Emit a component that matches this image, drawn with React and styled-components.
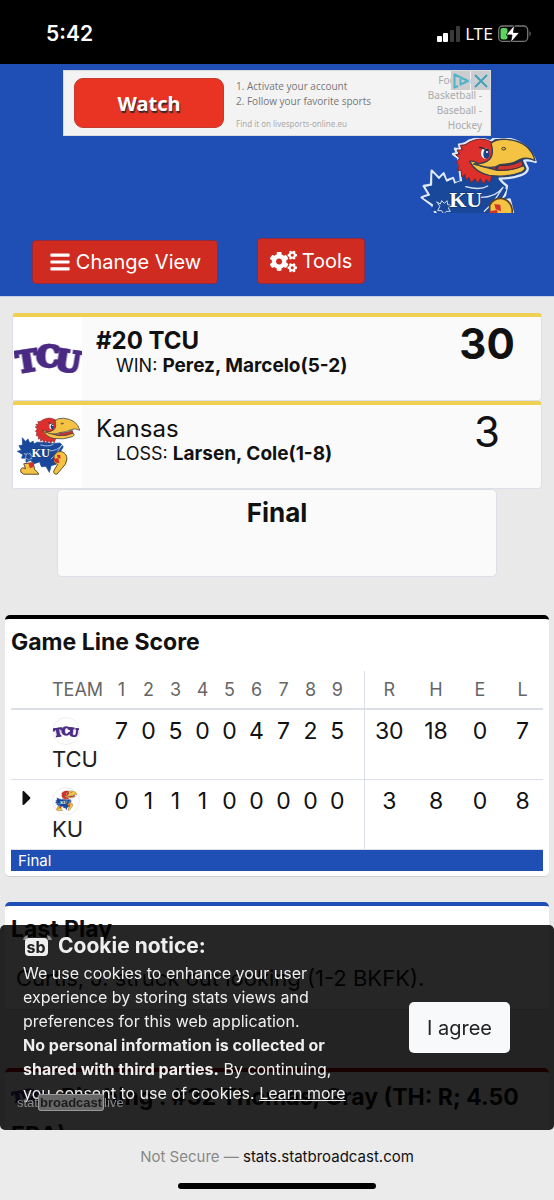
import React from 'react';
import styled, { createGlobalStyle } from 'styled-components';
import { FaBars, FaCaretRight, FaCogs } from 'react-icons/fa';

const innings = [1, 2, 3, 4, 5, 6, 7, 8, 9];
const totals = ['R', 'H', 'E', 'L'];

const lineScore = [
  {
    team: 'TCU',
    batting: false,
    runs: [7, 0, 5, 0, 0, 4, 7, 2, 5],
    totals: [30, 18, 0, 7],
  },
  {
    team: 'KU',
    batting: true,
    runs: [0, 1, 1, 1, 0, 0, 0, 0, 0],
    totals: [3, 8, 0, 8],
  },
];

const TcuLogo = ({ width }) => (
  <svg width={width} viewBox='0 0 210 120' role='img' aria-label='TCU'>
    <TcuLetters>
      <text x='40' y='100' transform='rotate(-9 40 64)'>
        T
      </text>
      <text x='105' y='86'>
        C
      </text>
      <text x='168' y='100' transform='rotate(9 168 64)'>
        U
      </text>
    </TcuLetters>
  </svg>
);

const Jayhawk = ({ width, viewBox, outline, backing }) => (
  <svg width={width} viewBox={viewBox} role='img' aria-label='Kansas Jayhawk'>
    <g strokeLinejoin='round' strokeLinecap='round'>
      {/* light edge behind the whole bird */}
      <path
        d='M128 72 L112 60 L124 58 L118 44 L134 46 L130 32 Q150 30 160 20 Q190 8 224 22 L236 12 Q300 8 334 42 Q352 60 360 84 Q342 76 326 80 L336 102 Q338 116 314 124 Q286 134 252 134 L262 146 L274 156 L268 184 L246 204 L282 196 L292 236 L200 262 L80 250 L60 238 L50 214 L18 190 L40 182 L24 156 L46 152 L48 110 L70 132 L84 118 L92 140 L112 132 L118 148 L136 142 Z'
        fill={backing}
        stroke={outline}
        strokeWidth='7'
      />
      {/* tail and body */}
      <path
        d='M132 144 L114 152 L110 138 L92 148 L82 126 L70 140 L52 120 L54 158 L34 162 L48 186 L26 192 L56 210 L48 228 L72 230 L72 250 L96 240 L116 258 L144 248 L154 274 L178 272 L196 304 L206 268 L230 262 L244 214 L270 168 L254 148 L212 150 L180 146 Z'
        fill='#19489a'
        stroke='#19489a'
        strokeWidth='4'
      />
      <path
        d='M64 204 L74 210 L78 200 L86 208 L94 200 L96 212 L106 214 L98 222 L104 232 L92 232 L84 240 L78 230 L66 230 L72 218 Z'
        fill='none'
        stroke='#d3e0f1'
        strokeWidth='3'
      />
      <path
        d='M150 158 Q194 170 216 156 M196 190 Q240 190 262 160 M262 160 L232 206 L206 232'
        fill='none'
        stroke='#d3e0f1'
        strokeWidth='4'
      />
      {/* shoes */}
      <path
        d='M222 214 Q236 188 262 194 Q288 202 290 232 Q288 262 262 284 L236 314 Q216 314 220 296 L240 262 L222 252 Z'
        fill='#f5c344'
        stroke='#5b4321'
        strokeWidth='5'
      />
      <path
        d='M220 232 L244 228 L250 256 L228 252 Z M236 210 L254 212 L256 232 L240 226 Z'
        fill='#d7312c'
      />
      <path
        d='M62 258 L110 252 L118 290 Q134 300 140 314 L60 314 Q38 306 44 288 Q50 274 68 284 Z'
        fill='#f5c344'
        stroke='#5b4321'
        strokeWidth='5'
      />
      <path d='M84 254 L112 252 L112 276 L92 282 Z' fill='#d7312c' />
      {/* head */}
      <path
        d='M228 24 Q196 6 162 24 Q148 36 134 34 L140 48 L124 48 L132 60 L120 62 L132 72 L122 86 L130 92 L126 110 L136 108 L138 128 L148 122 L150 138 L160 130 L166 146 L178 134 L186 148 L194 134 L204 150 L212 136 L222 146 L230 124 L244 92 L240 50 Z'
        fill='#dd2f2b'
        stroke='#7c2430'
        strokeWidth='3'
      />
      <path
        d='M162 82 Q176 78 196 96 L242 108 Q286 112 322 94 Q336 106 318 114 Q272 132 220 124 Q178 114 162 82 Z'
        fill='#f5c344'
        stroke='#38404e'
        strokeWidth='4'
      />
      <path
        d='M250 94 Q288 98 318 80 L322 96 Q286 112 244 108 Z'
        fill='#cf3530'
        stroke='#3b2f38'
        strokeWidth='3'
      />
      <path
        d='M226 28 Q240 14 272 16 Q344 22 358 80 Q334 68 314 76 Q288 92 252 92 Q236 104 204 98 L174 90 Q208 90 222 76 Q236 60 226 28 Z'
        fill='#f5c344'
        stroke='#38404e'
        strokeWidth='4'
      />
      <ellipse cx='208' cy='58' rx='12' ry='16' fill='#fff' />
      <ellipse cx='212' cy='60' rx='9' ry='14' fill='#1b4186' />
      <circle cx='214' cy='54' r='3' fill='#fff' />
      <path d='M192 40 L218 48' stroke='#23293a' strokeWidth='4' />
      <ellipse
        cx='264'
        cy='44'
        rx='6'
        ry='4'
        fill='#e5ad35'
        stroke='#4f4730'
        strokeWidth='3'
      />
      <Monogram x='150' y='220'>
        KU
      </Monogram>
    </g>
  </svg>
);

const SmallJayhawk = ({ width }) => (
  <Jayhawk
    width={width}
    viewBox='8 4 362 320'
    outline='#fff'
    backing='#fff'
  />
);

const StatusBar = () => (
  <StatusRow>
    <Clock>5:42</Clock>
    <StatusIcons>
      <svg width='24' height='18' viewBox='0 0 24 18' aria-hidden='true'>
        <rect x='0' y='11' width='5' height='6' rx='1' fill='#fff' />
        <rect x='6' y='8' width='5' height='9' rx='1' fill='#fff' />
        <rect x='13' y='5' width='4' height='12' rx='1' fill='#3a3a3a' />
        <rect x='19' y='1' width='4' height='16' rx='1' fill='#3a3a3a' />
      </svg>
      <span>LTE</span>
      <svg width='34' height='20' viewBox='0 0 34 20' aria-hidden='true'>
        <rect
          x='0.7'
          y='2'
          width='29'
          height='15.4'
          rx='4'
          fill='none'
          stroke='#777'
          strokeWidth='1.3'
        />
        <rect x='2.5' y='4' width='7' height='11.5' rx='2' fill='#5fd35f' />
        <path d='M31.5 7 Q34 9.7 31.5 12.5 Z' fill='#777' />
        <path
          d='M16.5 1 L8 11 L14 11 L12.5 19 L21.5 8.5 L15.5 8.5 Z'
          fill='#fff'
          stroke='#000'
          strokeWidth='0.8'
        />
      </svg>
    </StatusIcons>
  </StatusRow>
);

const AdBanner = () => (
  <Ad>
    <WatchButton type='button'>Watch</WatchButton>
    <AdCopy>
      <AdSteps>
        <li>Activate your account</li>
        <li>Follow your favorite sports</li>
      </AdSteps>
      <AdSource>Find it on livesports-online.eu</AdSource>
    </AdCopy>
    <AdSports>
      <span>Football -</span>
      <span>Basketball -</span>
      <span>Baseball -</span>
      <span>Hockey</span>
    </AdSports>
    <AdControls>
      <AdControl type='button' aria-label='Ad choices'>
        <svg width='18' height='16' viewBox='0 0 18 16'>
          <path
            d='M6 13 L2.5 14.5 L2.5 1.5 L16 8 L8.5 11.5 L8.5 6'
            fill='none'
            stroke='#52b3c6'
            strokeWidth='2'
            strokeLinejoin='round'
          />
        </svg>
      </AdControl>
      <AdControl type='button' aria-label='Close ad'>
        <svg width='16' height='16' viewBox='0 0 16 16'>
          <path
            d='M2 2 L14 14 M14 2 L2 14'
            stroke='#3f9fb8'
            strokeWidth='1.8'
          />
        </svg>
      </AdControl>
    </AdControls>
  </Ad>
);

const LineScoreTable = () => (
  <ScoreTable>
    <colgroup>
      <Col $width={30} />
      <Col $width={67} />
      {innings.map((n) => (
        <Col key={n} $width={n === 9 ? 40 : 27} />
      ))}
      <Col $width={50} />
      <Col $width={44} />
      <Col $width={44} />
      <Col $width={41} />
    </colgroup>
    <thead>
      <tr>
        <HeadCell aria-label='Batting' />
        <HeadCell $team scope='col'>
          TEAM
        </HeadCell>
        {innings.map((n) => (
          <HeadCell key={n} $last={n === 9} scope='col'>
            {n}
          </HeadCell>
        ))}
        {totals.map((label) => (
          <HeadCell key={label} scope='col'>
            {label}
          </HeadCell>
        ))}
      </tr>
    </thead>
    <tbody>
      {lineScore.map((row) => (
        <tr key={row.team}>
          <BattingCell>{row.batting && <FaCaretRight size={24} />}</BattingCell>
          <TeamCell scope='row'>
            <RoundBadge>
              {row.team === 'TCU' ? (
                <TcuLogo width={26} />
              ) : (
                <SmallJayhawk width={24} />
              )}
            </RoundBadge>
            {row.team}
          </TeamCell>
          {row.runs.map((value, i) => (
            <ScoreCell key={i} $last={i === 8}>
              {value}
            </ScoreCell>
          ))}
          {row.totals.map((value, i) => (
            <ScoreCell key={totals[i]}>{value}</ScoreCell>
          ))}
        </tr>
      ))}
    </tbody>
  </ScoreTable>
);

const CookieNotice = () => (
  <Notice role='dialog' aria-labelledby='cookie-title'>
    <NoticeBody>
      <NoticeTitle id='cookie-title'>
        <svg width='30' height='22' viewBox='0 0 30 22' aria-hidden='true'>
          <path
            d='M0 5 Q1 1 5 0 L4 5 Z M29 5 Q28 1 24 0 L25 5 Z'
            fill='#8c8c8c'
          />
          <rect x='2' y='3' width='23' height='18' rx='4' fill='#eee' />
          <SbText x='13' y='18'>
            sb
          </SbText>
        </svg>
        Cookie notice:
      </NoticeTitle>
      <NoticeText>
        We use cookies to enhance your user experience by storing stats views
        and preferences for this web application.
        <br />
        <b>
          No personal information is collected or shared with third parties.
        </b>{' '}
        By continuing, you consent to use of cookies.{' '}
        <a href='#learn-more'>Learn more</a>
      </NoticeText>
    </NoticeBody>
    <AgreeButton type='button'>I agree</AgreeButton>
    <Brand>
      stat<mark>broadcast</mark>live
    </Brand>
  </Notice>
);

const App = () => {
  return (
    <Page>
      <GlobalStyle />
      <StatusBar />
      <Banner>
        <AdBanner />
        <HeroLogo>
          <Jayhawk
            width={120}
            viewBox='10 12 360 225'
            outline='#dfe8f7'
            backing='#19489a'
          />
        </HeroLogo>
        <Toolbar>
          <ToolButton type='button' $wide>
            <FaBars size={22} />
            Change View
          </ToolButton>
          <ToolButton type='button'>
            <FaCogs size={27} />
            Tools
          </ToolButton>
        </Toolbar>
      </Banner>

      <Scoreboard>
        <TeamCard>
          <TeamLogo>
            <TcuLogo width={68} />
          </TeamLogo>
          <TeamInfo>
            <TeamName $winner>#20 TCU</TeamName>
            <Decision>
              WIN: <b>Perez, Marcelo(5-2)</b>
            </Decision>
          </TeamInfo>
          <TeamScore $winner>30</TeamScore>
        </TeamCard>
        <TeamCard>
          <TeamLogo>
            <SmallJayhawk width={68} />
          </TeamLogo>
          <TeamInfo>
            <TeamName>Kansas</TeamName>
            <Decision>
              LOSS: <b>Larsen, Cole(1-8)</b>
            </Decision>
          </TeamInfo>
          <TeamScore>3</TeamScore>
        </TeamCard>
        <GameState>Final</GameState>
      </Scoreboard>

      <Panels>
        <Panel $color='#000'>
          <PanelTitle>Game Line Score</PanelTitle>
          <LineScoreTable />
          <StateStrip>Final</StateStrip>
        </Panel>
        <Panel $color='#1f4fb5'>
          <PanelTitle>Last Play</PanelTitle>
          <PlayText>Curtis, J. struck out looking (1-2 BKFK).</PlayText>
        </Panel>
        <PitchingPanel $color='#a00'>
          <PitcherTitle>
            <TcuLogo width={34} />
            Pitching : #32 Thomas, Gray (TH: R; 4.50 ERA)
          </PitcherTitle>
        </PitchingPanel>
      </Panels>

      <BottomArea>
        <CookieNotice />
        <AddressBar>
          <p>
            <span>Not Secure —</span> stats.statbroadcast.com
          </p>
          <HomeIndicator />
        </AddressBar>
      </BottomArea>
    </Page>
  );
};

export default App;

const GlobalStyle = createGlobalStyle`
  * {
    box-sizing: border-box;
  }
  body {
    margin: 0;
    background: #e9e9ea;
    color: #111;
    font-family: Inter, 'Liberation Sans', sans-serif;
  }
  h1, h2, p, ol {
    margin: 0;
    padding: 0;
  }
  button {
    font-family: inherit;
    cursor: pointer;
  }
`;

const Page = styled.div`
  display: flex;
  flex-direction: column;
`;

const TcuLetters = styled.g`
  font-family: 'DejaVu Serif', serif;
  font-weight: bold;
  font-size: 90px;
  text-anchor: middle;
  fill: #4b2a83;
  stroke: #4b2a83;
  stroke-width: 7px;
  filter: drop-shadow(3px 0 0 #a99bc6) drop-shadow(-3px 0 0 #a99bc6);
`;

const Monogram = styled.text`
  font-family: 'Liberation Serif', serif;
  font-weight: bold;
  font-size: 66px;
  text-anchor: middle;
  fill: #fff;
  stroke: #103872;
  stroke-width: 5px;
  paint-order: stroke;
`;

const StatusRow = styled.header`
  display: flex;
  justify-content: space-between;
  align-items: center;
  height: 64px;
  padding: 3px 22px 0 46px;
  background: #000;
  color: #fff;
`;

const Clock = styled.span`
  font-size: 21px;
  font-weight: 600;
`;

const StatusIcons = styled.div`
  display: flex;
  align-items: center;
  gap: 5px;
  font-size: 16px;
`;

const Banner = styled.div`
  display: flex;
  flex-direction: column;
  padding: 6px 0 12px;
  background: #1f4fb5;
  border-bottom: 1px solid #c5d0e8;
`;

const Ad = styled.aside`
  position: relative;
  display: flex;
  align-self: center;
  width: 428px;
  max-width: 100%;
  height: 66px;
  padding: 2px 8px 0 10px;
  border: 1px solid #dcdcdc;
  background: #f3f3f3;
  color: #777;
  font-family: 'Noto Sans', sans-serif;
`;

const WatchButton = styled.button`
  width: 150px;
  height: 50px;
  margin-top: 5px;
  border: 1px solid #c43a2c;
  border-radius: 9px;
  background: #e93323;
  color: #fff;
  font-family: 'Noto Sans', sans-serif;
  font-size: 20px;
  font-weight: 700;
  text-shadow: 1px 2px 1px #33272a;
`;

const AdCopy = styled.div`
  padding: 6px 0 0 12px;
`;

const AdSteps = styled.ol`
  list-style-position: inside;
  font-family: 'Open Sans', 'Noto Sans', sans-serif;
  font-size: 10px;
  line-height: 15px;
`;

const AdSource = styled.p`
  margin-top: 9px;
  color: #aaa;
  font-size: 8px;
  line-height: 12px;
`;

const AdSports = styled.div`
  display: flex;
  flex-direction: column;
  align-items: flex-end;
  margin-left: auto;
  color: #aaa;
  font-size: 10px;
  line-height: 15px;
`;

const AdControls = styled.div`
  position: absolute;
  top: 0;
  right: 0;
  display: flex;
  gap: 1px;
`;

const AdControl = styled.button`
  display: grid;
  place-items: center;
  width: 19px;
  height: 19px;
  padding: 0;
  border: 0;
  background: #cccdd0;
`;

const HeroLogo = styled.div`
  display: flex;
  justify-content: flex-end;
  padding: 2px 15px 0 0;
`;

const Toolbar = styled.nav`
  display: flex;
  align-items: flex-end;
  gap: 39px;
  padding: 25px 32px 0;
`;

const ToolButton = styled.button`
  display: flex;
  align-items: center;
  justify-content: center;
  gap: 5px;
  width: ${(props) => (props.$wide ? '186px' : '108px')};
  height: ${(props) => (props.$wide ? '44px' : '46px')};
  padding: 0;
  border: 1px solid #8f2a45;
  border-radius: 4px;
  background: #cf2b20;
  color: #fff;
  font-size: 20px;
`;

const Scoreboard = styled.section`
  display: flex;
  flex-direction: column;
  padding: 16px 12px 0;
`;

const TeamCard = styled.article`
  display: flex;
  min-height: 88px;
  border: 1px solid #dcdfe6;
  border-top: 4px solid #f0cf55;
  border-radius: 4px;
  background: #fafafa;
`;

const TeamLogo = styled.div`
  display: grid;
  place-items: center;
  width: 69px;
  background: #fff;
`;

const TeamInfo = styled.div`
  flex: 1;
  padding: 9px 0 0 14px;
`;

const TeamName = styled.h2`
  font-size: 24px;
  font-weight: ${(props) => (props.$winner ? 700 : 400)};
  line-height: 29px;
`;

const Decision = styled.p`
  padding-left: 20px;
  font-size: 18px;
  line-height: 22px;

  b {
    font-size: 19px;
  }
`;

const TeamScore = styled.div`
  width: 108px;
  padding-top: 4px;
  font-size: 42px;
  font-weight: ${(props) => (props.$winner ? 700 : 400)};
  line-height: 46px;
  text-align: center;
`;

const GameState = styled.div`
  align-self: center;
  width: 83%;
  min-height: 88px;
  padding-top: 7px;
  border: 1px solid #dcdfe6;
  border-radius: 5px;
  background: #fafafa;
  font-size: 26px;
  font-weight: 700;
  line-height: 32px;
  text-align: center;
`;

const Panels = styled.main`
  display: flex;
  flex-direction: column;
  gap: 25px;
  padding: 38px 5px 0;
`;

const Panel = styled.section`
  padding: 0 6px 5px;
  border-top: 4px solid ${(props) => props.$color};
  border-bottom: 1px solid #cfcfcf;
  border-radius: 5px;
  background: #fff;
`;

const PitchingPanel = styled(Panel)`
  margin-top: 33px;
`;

const PanelTitle = styled.h2`
  padding: 8px 0;
  font-size: 23px;
  font-weight: 700;
  line-height: 30px;
`;

const ScoreTable = styled.table`
  width: 100%;
  margin-top: 6px;
  border-collapse: collapse;
  table-layout: fixed;
`;

const Col = styled.col`
  width: ${(props) => props.$width}px;
`;

const HeadCell = styled.th`
  height: 38px;
  padding: ${(props) => (props.$last ? '0 13px 0 0' : '0')};
  padding-left: ${(props) => (props.$team ? '11px' : '0')};
  border-right: ${(props) => (props.$last ? '1px solid #dcdfe6' : '0')};
  border-bottom: 2px solid #dcdfe6;
  color: #666;
  font-size: 18px;
  font-weight: 400;
  text-align: ${(props) => (props.$team ? 'left' : 'center')};
`;

const BattingCell = styled.td`
  padding: 6px 0 0 2px;
  border-bottom: 1px solid #dcdfe6;
  text-align: center;
  vertical-align: top;
`;

const TeamCell = styled.th`
  padding: 7px 0 6px 11px;
  border-bottom: 1px solid #dcdfe6;
  color: #222;
  font-size: 22px;
  font-weight: 400;
  line-height: 28px;
  text-align: left;
`;

const RoundBadge = styled.span`
  display: grid;
  place-items: center;
  width: 28px;
  height: 28px;
  border: 1px solid #eee;
  border-radius: 50%;
`;

const ScoreCell = styled.td`
  padding: ${(props) => (props.$last ? '7px 13px 0 0' : '7px 0 0')};
  border-right: ${(props) => (props.$last ? '1px solid #dcdfe6' : '0')};
  border-bottom: 1px solid #dcdfe6;
  font-size: 23px;
  line-height: 28px;
  text-align: center;
  vertical-align: top;
`;

const StateStrip = styled.p`
  padding-left: 7px;
  background: #1f4fb5;
  color: #fff;
  font-size: 15px;
  line-height: 21px;
`;

const PlayText = styled.p`
  padding: 12px 5px;
  font-size: 22px;
  line-height: 28px;
`;

const PitcherTitle = styled.h2`
  padding: 6px 0;
  font-size: 23px;
  font-weight: 700;
  line-height: 38px;

  svg {
    margin-right: 16px;
  }
`;

const BottomArea = styled.div`
  position: fixed;
  right: 0;
  bottom: 0;
  left: 0;
`;

const Notice = styled.div`
  position: relative;
  display: flex;
  align-items: center;
  justify-content: space-between;
  min-height: 205px;
  padding: 0 44px 0 23px;
  border-radius: 5px;
  background: rgba(0, 0, 0, 0.85);
  color: #eee;
`;

const NoticeBody = styled.div`
  width: 330px;
`;

const NoticeTitle = styled.h2`
  display: flex;
  align-items: center;
  gap: 5px;
  font-size: 21px;
  font-weight: 700;
  line-height: 30px;
`;

const SbText = styled.text`
  font-family: Inter, sans-serif;
  font-weight: 700;
  font-size: 16px;
  text-anchor: middle;
  fill: #222;
`;

const NoticeText = styled.p`
  padding-bottom: 20px;
  font-size: 16px;
  line-height: 24px;

  a {
    color: inherit;
  }
`;

const AgreeButton = styled.button`
  width: 101px;
  height: 51px;
  border: 0;
  border-radius: 5px;
  background: #f8f9fa;
  color: #222;
  font-size: 20px;
`;

const Brand = styled.span`
  position: absolute;
  bottom: 20px;
  left: 17px;
  color: #888;
  font-family: 'Liberation Sans', sans-serif;
  font-size: 13px;
  line-height: 14px;

  mark {
    padding: 0 1px;
    border: 1px solid #999;
    border-radius: 3px;
    background: #666;
    color: #1c1c1c;
    font-weight: 700;
  }
`;

const AddressBar = styled.footer`
  display: flex;
  flex-direction: column;
  align-items: center;
  justify-content: space-between;
  height: 70px;
  padding: 16px 0 11px;
  background: #ebebeb;
  font-size: 15px;
  line-height: 22px;

  span {
    color: #888;
  }
`;

const HomeIndicator = styled.div`
  width: 198px;
  height: 6px;
  border-radius: 3px;
  background: #000;
`;
